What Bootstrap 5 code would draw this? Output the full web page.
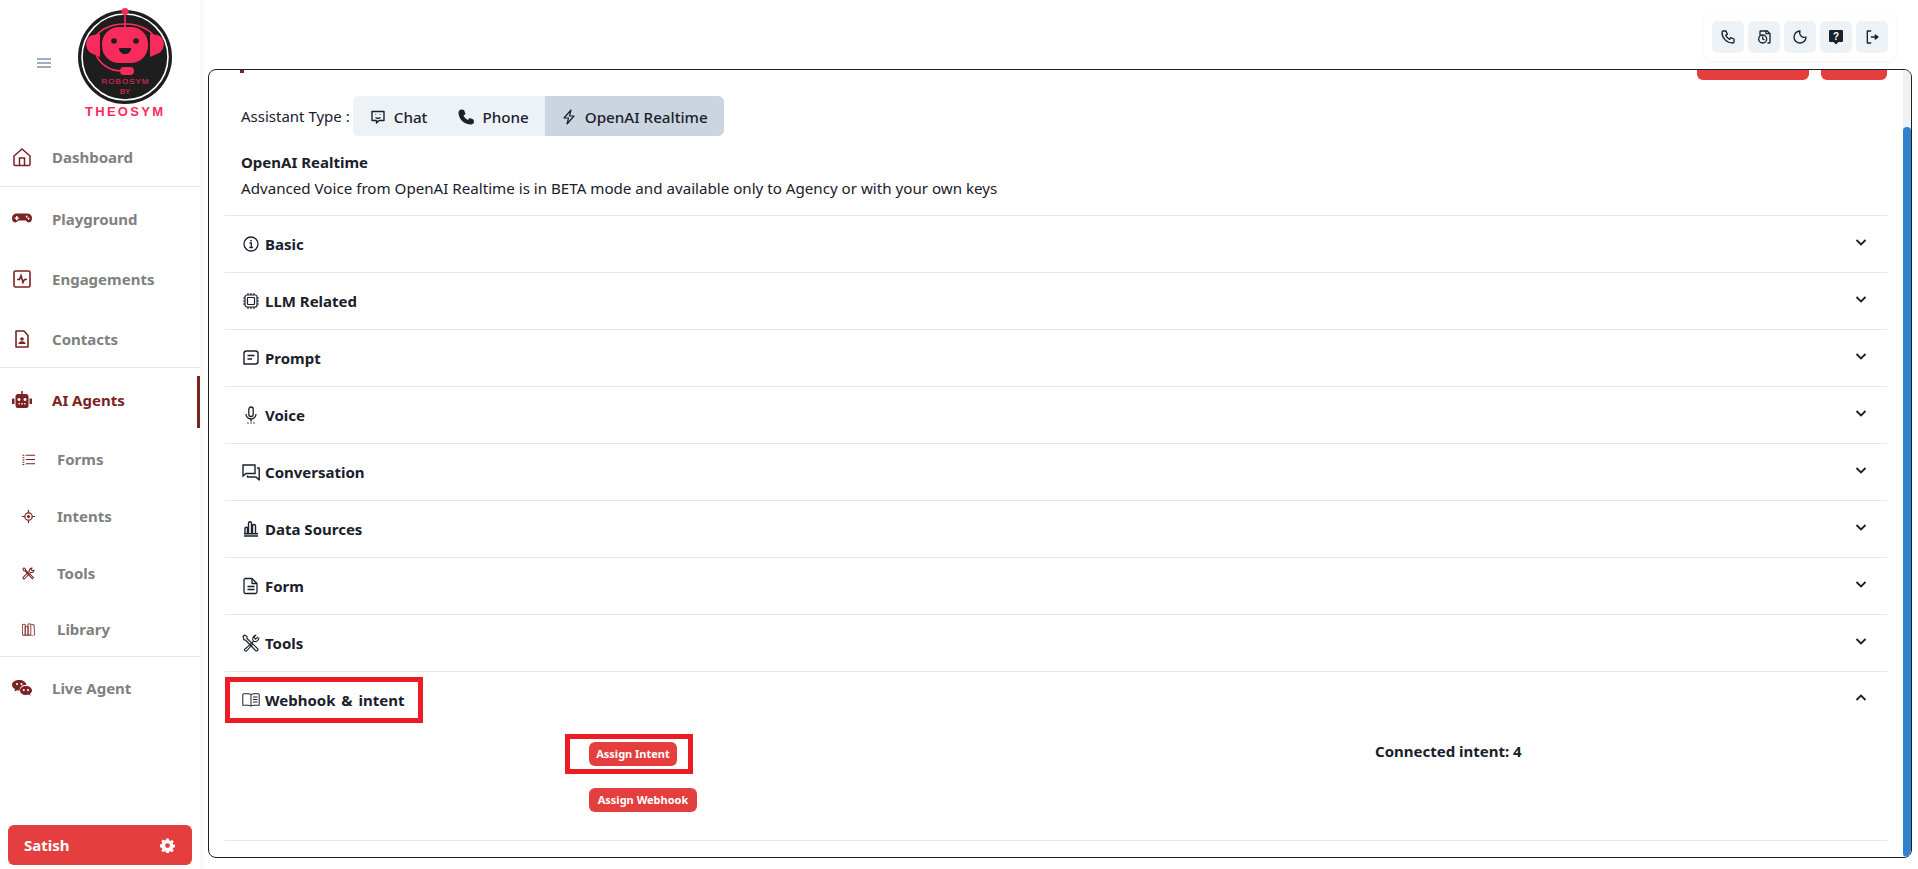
<!DOCTYPE html>
<html lang="en">
<head>
<meta charset="utf-8">
<title>Robosym</title>
<link href="https://cdn.jsdelivr.net/npm/bootstrap@5.3.0/dist/css/bootstrap.min.css" rel="stylesheet">
<style>
html,body{height:100%;overflow:hidden}
body{font-family:"Noto Sans",sans-serif;color:#1a202c;background:#fff;font-size:15px}
.shell{height:869px}
.side{width:200px;flex:none;box-shadow:2px 0 6px rgba(0,0,0,.05);height:869px;background:#fff}
.side-head{height:125px;padding-left:37px;gap:24px}
.burger{width:14px;height:10px;border-top:2px solid #a0aec0;border-bottom:2px solid #a0aec0;position:relative}
.burger::after{content:"";position:absolute;left:0;right:0;top:2px;height:2px;background:#a0aec0}
.logo{width:100px;height:120px;margin-top:5px}
.nav-i{height:52px;padding-left:12px;color:#808080;font-weight:700;font-size:15px;gap:20px;position:relative}
.nav-i svg{width:20px;height:20px;color:#7b2222;flex:none}
.nav-i.up-t{padding-bottom:2px}
.nav-i.on{color:#7b2222;margin-top:8px;padding-bottom:4px}
.nav-i.on::after{content:"";position:absolute;right:0;top:0;bottom:0;width:3px;background:#7b2222}
.gap-b{margin-bottom:8px}
.end-b{margin-bottom:2px}
.first-a{margin-top:7px}
.first-b{margin-top:6px}
.nav-s{height:57px;padding:0 0 2px 22px;color:#808080;font-weight:700;font-size:15px;gap:22px}
.nav-s svg{width:13px;height:13px;color:#7b2222;flex:none}
.nav-s.top-s{margin-top:4px}
.nav-s.last-s{height:53px;padding-top:1px}
.sep{height:1px;background:#e2e8f0}
.user-btn{width:184px;height:40px;margin:0 8px 4px;background:#e53e3e;color:#fff;border:0;border-radius:6px;font-weight:700;font-size:15px;padding:0 17px 0 16px}
.user-btn:hover{background:#e53e3e;color:#fff}
.user-btn svg{width:15px;height:15px}
.mainc{min-width:0}
.topbar{height:69px;padding:13px 22px 8px 0}
.tools-box{padding:8px;gap:4px;border-radius:8px;box-shadow:0 1px 4px rgba(0,0,0,.05);background:#fff}
.tool-b{width:32px;height:32px;border:0;background:#edf2f7;border-radius:6px;padding:0;color:#1a202c}
.tool-b svg{width:16px;height:16px}
.panel{height:789px;margin:0 6px 0 8px;border:1px solid #1a202c;border-radius:8px;overflow:hidden}
.scroller{height:787px;overflow-y:scroll;padding:0 16px 16px;flex:1 1 auto;min-width:0;scrollbar-width:none}
.scroller::-webkit-scrollbar{display:none}
.rail{width:8px;flex:none;background:#f1f1f1;padding-top:57px}
.rail-th{height:730px;background:#3182ce;border-radius:4px}
.hidden-head{padding-top:32px;margin-bottom:16px;height:72px}
.sliver{width:4px;height:8px;margin:25px 0 0 15px;background:#7b2222}
.r1{width:112px;height:40px;background:#e53e3e;border-radius:6px}
.r2{width:66px;height:40px;background:#e53e3e;border-radius:6px;margin-left:12px}
.type-row{height:40px;padding-left:16px;font-size:15px}
.type-l{padding-top:1px}
.seg{margin-left:3px;border-radius:6px;overflow:hidden;background:#edf2f7;height:40px}
.seg-b{border:0;background:transparent;height:40px;font-weight:500;font-size:15.2px;color:#1a202c;gap:8px;white-space:nowrap}
.seg-b svg{width:16px;height:16px}
.seg-b.on{background:#cbd5e0}
.seg-c{padding:2px 16px 0 17px}
.seg-p{padding:2px 16px 0 15px}
.seg-o{padding:2px 16px 0 16px}
.intro{padding:13px 0 14px 16px;line-height:26px;font-size:15.15px}
.intro b{font-weight:700;display:block;font-size:15px}
.acc-i{border-top:1px solid #e2e8f0}
.acc-i.last-i{border-bottom:1px solid #e2e8f0}
.acc-h{height:56px;padding:0 16px 0 17px}
.acc-t{gap:5px;font-weight:700;font-size:15px}
.acc-t svg{width:18px;height:18px;flex:none}
.wide-w{word-spacing:2px}
.chev{width:16px;height:16px;flex:none;margin:0 2px 4px 0}
.acc-p{height:112px;position:relative}
.btn-x{background:#e53e3e;color:#fff;font-weight:700;font-size:11px;border-radius:6px;height:24px;padding:0;border:0;line-height:24px;white-space:nowrap}
.btn-x:hover{background:#e53e3e;color:#fff}
.btn-i{width:88px}
.btn-w{width:108px}
.btn-col{width:536px;padding-left:364px;gap:22px;padding-top:14px;flex:none}
.conn{margin-left:614px;padding-top:12px;font-weight:700;font-size:15px;white-space:nowrap}
.anno{position:absolute;border:5px solid #ed1c24;pointer-events:none}
.anno-a{left:0;top:-51px;width:198px;height:46px}
.anno-b{left:340px;top:6px;width:128px;height:40px}
</style>
</head>
<body>
<div class="shell d-flex">
<aside class="side d-flex flex-column">
  <div class="side-head d-flex align-items-center">
    <span class="burger"></span>
    <svg class="logo" viewBox="0 0 100 120" fill="none">
      <circle cx="50" cy="52" r="47" fill="#1e1e1e"/>
      <circle cx="50" cy="52" r="43" stroke="#fff" stroke-width="1.6"/>
      <path d="M18 40C20 12 80 12 82 40" stroke="#f92b5d" stroke-width="1.6"/>
      <path d="M18 30c-9 2-9 16 0 19l7 3V29zM82 30c9 2 9 16 0 19l-7 3V29z" fill="#f92b5d"/>
      <path d="M50 7v16" stroke="#f92b5d" stroke-width="1.6"/>
      <circle cx="50" cy="6.500" r="3.600" fill="#f92b5d"/>
      <rect x="27" y="22" width="46" height="36" rx="17" fill="#f92b5d"/>
      <circle cx="39" cy="36" r="2.800" fill="#1e1e1e"/>
      <circle cx="61" cy="36" r="2.800" fill="#1e1e1e"/>
      <path d="M44 43h12c0 8-12 8-12 0z" fill="#1e1e1e"/>
      <path d="M21 49c3 10 14 17 26 17" stroke="#f92b5d" stroke-width="1.6"/>
      <rect x="45" y="62" width="14" height="8" rx="4" fill="#f92b5d"/>
      <text x="50" y="79" text-anchor="middle" font-family="Liberation Sans,sans-serif" font-size="8" fill="#f92b5d" textLength="47">ROBOSYM</text>
      <text x="50" y="89" text-anchor="middle" font-family="Liberation Sans,sans-serif" font-size="8" fill="#f92b5d">BY</text>
      <text x="49" y="111" text-anchor="middle" font-family="Liberation Sans,sans-serif" font-weight="700" font-size="13" fill="#f92b5d" textLength="78" lengthAdjust="spacing">THEOSYM</text>
    </svg>
  </div>
  <div class="nav-i up-t first-a end-b d-flex align-items-center"><svg viewBox="0 0 20 20" fill="none" stroke="currentColor" stroke-width="1.5"><path d="M2 9l8-7 8 7v8.500a1 1 0 0 1-1 1H3a1 1 0 0 1-1-1z"/><path d="M7.500 18.500V11h5v7.500"/></svg>Dashboard</div>
  <div class="sep"></div>
  <div class="nav-i first-b gap-b d-flex align-items-center"><svg viewBox="0 0 20 20" fill="currentColor"><path fill-rule="evenodd" d="M5 4.500h10a5 5 0 0 1 5 4.600c0 2.400-.8 4.400-3 4.400-1.600 0-2.300-1-3.300-2H6.300c-1 1-1.700 2-3.300 2-2.200 0-3-2-3-4.400a5 5 0 0 1 5-4.600zM4 7v1.500H2.600v1.300H4v1.400h1.400V9.800H7V8.500H5.400V7zM14.700 6.400a1 1 0 1 0 .01 0zM16.500 8.600a1 1 0 1 0 .01 0z"/></svg>Playground</div>
  <div class="nav-i gap-b d-flex align-items-center"><svg viewBox="0 0 20 20" fill="none" stroke="currentColor" stroke-width="1.6"><rect x="2" y="2" width="16" height="16" rx="1.500"/><path d="M5 10.500h2.500L9 6.500l2 7 1.500-3H15"/></svg>Engagements</div>
  <div class="nav-i end-b d-flex align-items-center"><svg viewBox="0 0 20 20" fill="none" stroke="currentColor" stroke-width="1.6"><path d="M4 2h8l4 4.500V18H4z" stroke-linejoin="round"/><circle cx="10" cy="10" r="1.800" fill="currentColor" stroke="none"/><path d="M6.500 15c0-2 1.500-2.800 3.500-2.800s3.500.8 3.500 2.800z" fill="currentColor" stroke="none"/></svg>Contacts</div>
  <div class="sep"></div>
  <div class="nav-i on d-flex align-items-center"><svg viewBox="0 0 20 20" fill="currentColor"><path fill-rule="evenodd" d="M10 1a1 1 0 0 1 .7 1.700V4H14a2.500 2.500 0 0 1 2.500 2.500v9A2.500 2.500 0 0 1 14 18H6a2.500 2.500 0 0 1-2.500-2.500v-9A2.500 2.500 0 0 1 6 4h3.300V2.700A1 1 0 0 1 10 1zM7 8a1.500 1.500 0 1 0 .01 0zM13 8a1.500 1.500 0 1 0 .01 0zM6.500 13v1.500h1.300V13zM9.300 13v1.500h1.400V13zM12.200 13v1.500h1.300V13z"/><path d="M.5 8.500H2.500V14H.5a.5.500 0 0 1-.5-.5V9a.5.500 0 0 1 .5-.5zM17.500 8.500h2a.5.500 0 0 1 .5.5v4.500a.5.500 0 0 1-.5.5h-2z"/></svg>AI Agents</div>
  <div class="nav-s top-s d-flex align-items-center"><svg viewBox="0 0 14 14" fill="none" stroke="currentColor" stroke-width="1.100"><path d="M4 2.500h10M4 7h10M4 11.500h10M.5 2.500h2M.5 5h2M.5 7.500h2M.5 10h2M.5 12.500h2"/></svg>Forms</div>
  <div class="nav-s d-flex align-items-center"><svg viewBox="0 0 14 14" fill="none" stroke="currentColor" stroke-width="1.300"><circle cx="7" cy="7" r="4"/><circle cx="7" cy="7" r="1.700" fill="currentColor" stroke="none"/><path d="M7 0v3M7 11v3M0 7h3M11 7h3"/></svg>Intents</div>
  <div class="nav-s d-flex align-items-center"><svg viewBox="0 0 14 14" fill="none" stroke="currentColor" stroke-width="1.100" stroke-linejoin="round"><path d="M1 1.800L2.200 1l1.600 1.400v1l8.700 8-1.300 1.300-8.300-8.700h-1z"/><path d="M13 3.400a2.800 2.800 0 0 1-3.600 2.400L3 12.400a1 1 0 0 1-1.600-1.500L8 4.400A2.800 2.800 0 0 1 11 1L9.600 2.500l1.300 1.300z"/></svg>Tools</div>
  <div class="nav-s last-s d-flex align-items-center"><svg viewBox="0 0 14 14" fill="none" stroke="currentColor" stroke-width=".9"><path d="M.5 1.500h3V13h-3zM3.500 3.500h3V13h-3zM6.500 1h3v12h-3zM10 1.500l3 .5.500 11"/><path d="M1 13.500h12.500" opacity=".6"/></svg>Library</div>
  <div class="sep"></div>
  <div class="nav-i up-t first-b d-flex align-items-center"><svg viewBox="0 0 20 20" fill="currentColor"><path fill-rule="evenodd" d="M7.500 2C11 2 14 4 14.500 7c-3.500-.5-7 1.500-6.800 5.500-1 .2-2 0-2.900-.3L2.500 13.500l.5-2.400C1 10 0 8.500 0 6.800 0 4 3.300 2 7.500 2zM5 5a1 1 0 1 0 .01 0zM9.500 5a1 1 0 1 0 .01 0z"/><path fill-rule="evenodd" d="M14 8c3.300 0 6 1.900 6 4.500 0 1.400-.8 2.500-2 3.300l.5 2-2-1.200c-.8.200-1.600.4-2.500.4-3.300 0-6-2-6-4.500S10.700 8 14 8zM11.800 11a1 1 0 1 0 .01 0zM16 11a1 1 0 1 0 .01 0z"/></svg>Live Agent</div>
  <button class="user-btn btn d-flex align-items-center justify-content-between mt-auto"><span>Satish</span><svg viewBox="0 0 16 16" fill="#fff"><path fill-rule="evenodd" d="M6.700.5h2.600l.4 2 1.400.6 1.700-1.100 1.800 1.800-1.100 1.700.6 1.400 2 .4v2.600l-2 .4-.6 1.400 1.100 1.700-1.800 1.800-1.700-1.100-1.400.6-.4 2H6.700l-.4-2-1.400-.6-1.700 1.100-1.800-1.800 1.100-1.700-.6-1.400-2-.4V6.900l2-.4.6-1.400L1.400 3.400l1.800-1.800 1.700 1.100 1.400-.6zM8 5.500a2.500 2.500 0 1 0 .01 0z"/></svg></button>
</aside>
<main class="mainc flex-grow-1 d-flex flex-column">
  <div class="topbar d-flex justify-content-end">
    <div class="tools-box d-flex">
      <button class="tool-b btn d-flex align-items-center justify-content-center"><svg viewBox="0 0 24 24" fill="none" stroke="currentColor" stroke-width="2" stroke-linecap="round" stroke-linejoin="round"><path d="M5 3h4l2 5-2.500 1.500a11 11 0 0 0 6 6L16 13l5 2v4a2 2 0 0 1-2 2A16 16 0 0 1 3 5a2 2 0 0 1 2-2"/></svg></button>
      <button class="tool-b btn d-flex align-items-center justify-content-center"><svg viewBox="0 0 24 24" fill="none" stroke="currentColor" stroke-width="2" stroke-linecap="round" stroke-linejoin="round"><path d="M6 9V4a1 1 0 0 1 1-1h10l4 4v13a1 1 0 0 1-1 1h-2"/><path d="M15 3v4h5"/><circle cx="10" cy="15" r="6"/><path d="M10 12v3l2 1"/></svg></button>
      <button class="tool-b btn d-flex align-items-center justify-content-center"><svg viewBox="0 0 24 24" fill="none" stroke="currentColor" stroke-width="2" stroke-linecap="round" stroke-linejoin="round"><path d="M12 3a7 7 0 0 0 9 9 9 9 0 1 1-9-9z"/></svg></button>
      <button class="tool-b btn d-flex align-items-center justify-content-center"><svg viewBox="0 0 16 16"><path fill="#1a202c" d="M2 1h12a1 1 0 0 1 1 1v10a1 1 0 0 1-1 1h-3.500L8 15.500 5.500 13H2a1 1 0 0 1-1-1V2a1 1 0 0 1 1-1z"/><text x="8" y="11" text-anchor="middle" font-size="10" font-weight="700" font-family="Liberation Sans,sans-serif" fill="#fff">?</text></svg></button>
      <button class="tool-b btn d-flex align-items-center justify-content-center"><svg viewBox="0 0 24 24" fill="none" stroke="currentColor" stroke-width="2" stroke-linecap="round" stroke-linejoin="round"><path d="M10 3H5v18h5M11 12h8"/><path d="M17 9l4 3-4 3z" fill="currentColor"/></svg></button>
    </div>
  </div>
  <div class="panel d-flex">
    <div class="scroller" id="scr">
      <div class="hidden-head d-flex justify-content-between"><div class="sliver"></div><div class="d-flex"><div class="r1"></div><div class="r2"></div></div></div>
      <div class="type-row d-flex align-items-center">
        <span class="type-l">Assistant Type :</span>
        <div class="seg d-flex">
          <button class="seg-b seg-c d-flex align-items-center"><svg viewBox="0 0 16 16" fill="none" stroke="currentColor" stroke-width="1.400" stroke-linejoin="round"><path d="M2 2.500h12v9H9l-2.500 2.500V11.500H2z"/><path d="M5.500 5.500v.5M10.500 5.500v.5M5.500 8.500c1.500 1 3.500 1 5 0"/></svg>Chat</button>
          <button class="seg-b seg-p d-flex align-items-center"><svg viewBox="0 0 16 16" fill="currentColor"><path d="M3.500.5l2.500.5 1.500 4-2 1.500c1 2 2.500 3.500 4.500 4.500l1.500-2 4 1.500.5 2.500c-.2 1.500-1.500 2.500-3 2.500C6 15.500.5 10 .5 3.500c0-1.500 1.200-2.800 3-3z"/></svg>Phone</button>
          <button class="seg-b seg-o on d-flex align-items-center"><svg viewBox="0 0 16 16" fill="none" stroke="currentColor" stroke-width="1.200" stroke-linejoin="round"><path d="M10 1L3 9h4.500L6 15l7-8H8.500z"/></svg>OpenAI Realtime</button>
        </div>
      </div>
      <div class="intro"><b>OpenAI Realtime</b>Advanced Voice from OpenAI Realtime is in BETA mode and available only to Agency or with your own keys</div>
      <div class="acc-i"><div class="acc-h d-flex align-items-center justify-content-between"><div class="acc-t d-flex align-items-center"><svg viewBox="0 0 18 18" fill="none" stroke="currentColor" stroke-width="1.300"><circle cx="9" cy="9" r="7"/><path d="M7.500 8H9.300V12.500M7.300 12.500H11"/><circle cx="9" cy="5.600" r=".9" fill="currentColor" stroke="none"/></svg>Basic</div><svg class="chev" viewBox="0 0 16 16" fill="none" stroke="currentColor" stroke-width="1.800"><path d="M3.500 6L8 10.500 12.500 6"/></svg></div></div>
      <div class="acc-i"><div class="acc-h d-flex align-items-center justify-content-between"><div class="acc-t d-flex align-items-center"><svg viewBox="0 0 18 18" fill="none" stroke="currentColor" stroke-width="1.200"><rect x="3" y="3" width="12" height="12" rx="2"/><rect x="5.500" y="5.500" width="7" height="7" rx=".8"/><path d="M6 1v2M9 1v2M12 1v2M6 15v2M9 15v2M12 15v2M1 6h2M1 9h2M1 12h2M15 6h2M15 9h2M15 12h2"/></svg>LLM Related</div><svg class="chev" viewBox="0 0 16 16" fill="none" stroke="currentColor" stroke-width="1.800"><path d="M3.500 6L8 10.500 12.500 6"/></svg></div></div>
      <div class="acc-i"><div class="acc-h d-flex align-items-center justify-content-between"><div class="acc-t d-flex align-items-center"><svg viewBox="0 0 18 18" fill="none" stroke="currentColor" stroke-width="1.400"><path d="M4.500 2h9A2.500 2.500 0 0 1 16 4.500v8a2.500 2.500 0 0 1-2.500 2.500H2V4.500A2.500 2.500 0 0 1 4.500 2z"/><path d="M5.500 6.500h7M5.500 10h4.500"/></svg>Prompt</div><svg class="chev" viewBox="0 0 16 16" fill="none" stroke="currentColor" stroke-width="1.800"><path d="M3.500 6L8 10.500 12.500 6"/></svg></div></div>
      <div class="acc-i"><div class="acc-h d-flex align-items-center justify-content-between"><div class="acc-t d-flex align-items-center"><svg viewBox="0 0 18 18" fill="none" stroke="currentColor" stroke-width="1.300"><rect x="6.800" y="1" width="4.400" height="9.500" rx="2.200"/><path d="M4 8a5 5 0 0 0 10 0M9 13v2.500"/><path d="M5.500 17h1M8.500 17h1M11.500 17h1"/></svg>Voice</div><svg class="chev" viewBox="0 0 16 16" fill="none" stroke="currentColor" stroke-width="1.800"><path d="M3.500 6L8 10.500 12.500 6"/></svg></div></div>
      <div class="acc-i"><div class="acc-h d-flex align-items-center justify-content-between"><div class="acc-t d-flex align-items-center"><svg viewBox="0 0 18 18" fill="none" stroke="currentColor" stroke-width="1.400"><path d="M1 2h12v8.500H4L1 13z"/><path d="M15 5h2.200v12L14 14H5.500v-1.500" stroke-linejoin="round"/></svg>Conversation</div><svg class="chev" viewBox="0 0 16 16" fill="none" stroke="currentColor" stroke-width="1.800"><path d="M3.500 6L8 10.500 12.500 6"/></svg></div></div>
      <div class="acc-i"><div class="acc-h d-flex align-items-center justify-content-between"><div class="acc-t d-flex align-items-center"><svg viewBox="0 0 18 18" fill="none" stroke="currentColor" stroke-width="1.400"><path d="M3 13V8.500a1.200 1.200 0 0 1 2.500 0V13M6.500 13V3.200a1.500 1.500 0 0 1 3 0V13M10.500 13V6a1.500 1.500 0 0 1 3 0v7"/><path d="M2 13.800h14M2 16h14"/></svg>Data Sources</div><svg class="chev" viewBox="0 0 16 16" fill="none" stroke="currentColor" stroke-width="1.800"><path d="M3.500 6L8 10.500 12.500 6"/></svg></div></div>
      <div class="acc-i"><div class="acc-h d-flex align-items-center justify-content-between"><div class="acc-t d-flex align-items-center"><svg viewBox="0 0 18 18" fill="none" stroke="currentColor" stroke-width="1.300" stroke-linejoin="round"><path d="M3 1.500h7l5 5V15a1.500 1.500 0 0 1-1.500 1.500h-10A1.500 1.500 0 0 1 2 15V2.500z"/><path d="M10 1.500V6.500h5M5.500 9.500h7M5.500 12.500h7"/></svg>Form</div><svg class="chev" viewBox="0 0 16 16" fill="none" stroke="currentColor" stroke-width="1.800"><path d="M3.500 6L8 10.500 12.500 6"/></svg></div></div>
      <div class="acc-i"><div class="acc-h d-flex align-items-center justify-content-between"><div class="acc-t d-flex align-items-center"><svg viewBox="0 0 18 18" fill="none" stroke="currentColor" stroke-width="1.100" stroke-linejoin="round"><path d="M1 2.500L2.500 1 5 2.500V4.500L15.500 14.500a1.400 1.400 0 0 1-2 2L3.500 6H2z"/><path d="M17 3.500a4 4 0 0 1-5.500 3.800L2.500 15.500a1.400 1.400 0 0 0 2 1.500L11 9.800"/><path d="M11.500 7.300A4 4 0 0 1 14 1l-2 2.200 1.500 2L16 3"/></svg>Tools</div><svg class="chev" viewBox="0 0 16 16" fill="none" stroke="currentColor" stroke-width="1.800"><path d="M3.500 6L8 10.500 12.500 6"/></svg></div></div>
      <div class="acc-i last-i"><div class="acc-h d-flex align-items-center justify-content-between"><div class="acc-t wide-w d-flex align-items-center"><svg viewBox="0 0 18 18" fill="none" stroke="currentColor" stroke-width="1"><path d="M9 3.500C7 2.500 3 2.500 .8 3v11.500c2-.5 6-.5 8.200.5 2-1 6-1 8.200-.5V3C15 2.500 11 2.500 9 3.500zM9 3.500V15M11 6h4.500M11 8.500h4.500M11 11h4.500"/></svg><span>Webhook &amp; intent</span></div><svg class="chev" viewBox="0 0 16 16" fill="none" stroke="currentColor" stroke-width="1.800"><path d="M3.500 10L8 5.500l4.500 4.500"/></svg></div>
        <div class="acc-p d-flex">
          <div class="btn-col d-flex flex-column align-items-start"><button class="btn btn-x btn-i">Assign Intent</button><button class="btn btn-x btn-w">Assign Webhook</button></div>
          <div class="conn">Connected intent: 4</div>
          <div class="anno anno-a"></div><div class="anno anno-b"></div>
        </div>
      </div>
    </div>
    <div class="rail"><div class="rail-th"></div></div>
  </div>
</main>
</div>
<script src="https://cdn.jsdelivr.net/npm/bootstrap@5.3.0/dist/js/bootstrap.bundle.min.js"></script>
<script>var s=document.getElementById('scr');s.scrollTop=s.scrollHeight;</script>
</body>
</html>
